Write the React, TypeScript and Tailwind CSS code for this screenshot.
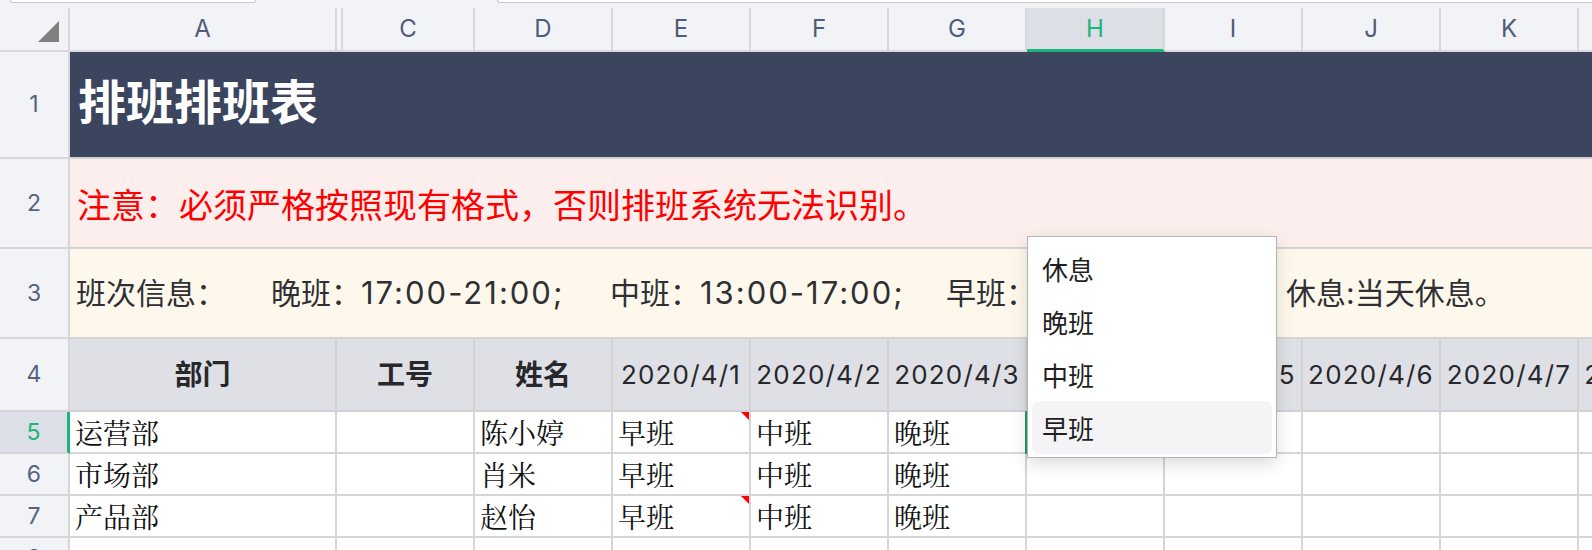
import React from 'react';

type Col = { key: string; w: string; head: string; active?: boolean };

const cols: Col[] = [
  { key: 'A', w: 'w-[267px]', head: '部门' },
  { key: 'C', w: 'w-[138px]', head: '工号' },
  { key: 'D', w: 'w-[138px]', head: '姓名' },
  { key: 'E', w: 'w-[138px]', head: '2020/4/1' },
  { key: 'F', w: 'w-[138px]', head: '2020/4/2' },
  { key: 'G', w: 'w-[138px]', head: '2020/4/3' },
  { key: 'H', w: 'w-[138px]', head: '2020/4/4', active: true },
  { key: 'I', w: 'w-[138px]', head: '2020/4/5' },
  { key: 'J', w: 'w-[138px]', head: '2020/4/6' },
  { key: 'K', w: 'w-[138px]', head: '2020/4/7' },
  { key: 'L', w: 'w-[138px]', head: '2020/4/8' },
];

const people = [
  { n: 5, h: 'h-[42px]', cells: ['运营部', '', '陈小婷', '早班', '中班', '晚班'], note: true, active: true },
  { n: 6, h: 'h-[42px]', cells: ['市场部', '', '肖米', '早班', '中班', '晚班'] },
  { n: 7, h: 'h-[42px]', cells: ['产品部', '', '赵怡', '早班', '中班', '晚班'], note: true },
  { n: 8, h: 'h-[42px]', cells: [] as string[] },
];

const options = ['休息', '晚班', '中班', '早班'];

const RowHead = ({ n, active }: { n: number; active?: boolean }) => (
  <div
    className={
      'w-[70px] shrink-0 flex items-center justify-center border-b-2 border-[#d6d6d8] text-[23px] ' +
      (active
        ? 'bg-[#dcdfe6] text-[#1db57b] border-r-[3px] border-r-[#1db57b]'
        : 'bg-[#f2f3f7] text-[#55637f] border-r-2')
    }
  >
    {n}
  </div>
);

const isText = (k: string) => k === 'A' || k === 'C' || k === 'D';

const App = () => {
  return (
    <div className="relative w-[1592px] h-[550px] overflow-hidden bg-[#f2f3f7] font-['Inter','Noto_Sans_CJK_SC',sans-serif]">
      {/* toolbar edge */}
      <div className="flex h-[8px] pl-[10px]">
        <div className="w-[246px] h-[3px] shrink-0 bg-white border-x border-b border-[#c8c8c8] rounded-b-[6px]" />
        <div className="ml-[241px] w-[1200px] h-[3px] shrink-0 bg-white border-l border-b border-[#c8c8c8] rounded-bl-[6px]" />
      </div>

      {/* column letters */}
      <div className="flex h-[44px] text-[24px] text-[#4f5b78]">
        <div className="w-[70px] shrink-0 flex items-end justify-end pr-[9px] pb-[8px] border-r-2 border-b-2 border-[#d8d8da]">
          <svg width="21" height="21" viewBox="0 0 21 21">
            <polygon points="21,0 21,21 0,21" fill="#808080" />
          </svg>
        </div>
        <div className="w-[267px] shrink-0 flex items-center justify-center border-r-2 border-b-2 border-[#d8d8da]">A</div>
        <div className="w-[6px] shrink-0 border-r-2 border-b-2 border-[#d8d8da]" />
        {cols.slice(1).map((c) => (
          <div
            key={c.key}
            className={
              (c.key === 'C' ? 'w-[132px] ' : 'w-[138px] ') +
              'shrink-0 flex items-center justify-center border-r-2 border-[#d8d8da] ' +
              (c.active ? 'bg-[#dcdfe6] text-[#1db57b] border-b-[3px] border-b-[#1db57b]' : 'border-b-2')
            }
          >
            {c.key}
          </div>
        ))}
      </div>

      {/* row 1 */}
      <div className="flex h-[107px]">
        <RowHead n={1} />
        <div className="flex-1 flex items-center pl-[8px] pb-[3px] bg-[#3b455d] border-b-2 border-[#d3d3d3] text-[48px] font-bold text-white">
          排班排班表
        </div>
      </div>

      {/* row 2 */}
      <div className="flex h-[90px]">
        <RowHead n={2} />
        <div className="flex-1 flex items-center pl-[7px] bg-[#fdeeee] border-b-2 border-[#d3d3d3] text-[34px] text-[#ff0000] font-['Noto_Sans_CJK_SC',sans-serif] whitespace-nowrap">
          注意：必须严格按照现有格式，否则排班系统无法识别。
        </div>
      </div>

      {/* row 3 */}
      <div className="flex h-[90px]">
        <RowHead n={3} />
        <div className="flex-1 flex items-center pl-[6px] bg-[#fef8ec] border-b-2 border-[#d3d3d3] text-[30px] text-[#2e3033] whitespace-nowrap">
          <span className="w-[195px] shrink-0">班次信息：</span>
          <span className="w-[339px] shrink-0">
            晚班：<span className="text-[31px] tracking-[2px]">17:00-21:00;</span>
          </span>
          <span className="w-[336px] shrink-0">
            中班：<span className="text-[31px] tracking-[2px]">13:00-17:00;</span>
          </span>
          <span className="w-[340px] shrink-0">
            早班：<span className="text-[31px] tracking-[2px]">09:00-13:00;</span>
          </span>
          <span className="shrink-0">休息:当天休息。</span>
        </div>
      </div>

      {/* row 4 header */}
      <div className="flex h-[73px]">
        <RowHead n={4} />
        {cols.map((c) => (
          <div
            key={c.key}
            className={
              c.w +
              ' shrink-0 flex items-center justify-center overflow-hidden whitespace-nowrap bg-[#dfe0e5] border-r-2 border-b-2 border-[#d2d2d5] text-[#26282b] ' +
              (isText(c.key) ? 'font-bold text-[28px]' : 'text-[26px] tracking-[1.2px]')
            }
          >
            {c.head}
          </div>
        ))}
      </div>

      {/* data rows */}
      {people.map((r) => (
        <div key={r.n} className={'flex ' + r.h}>
          <RowHead n={r.n} active={r.active} />
          {cols.map((c, i) => (
            <div
              key={c.key}
              className={
                c.w +
                ' relative shrink-0 flex items-center pl-[5px] bg-white border-r-2 border-b-2 border-[#d6d6d8] text-[28px] text-[#111] whitespace-nowrap font-["Noto_Serif_CJK_SC","Noto_Sans_CJK_SC",serif]'
              }
            >
              {r.cells[i] ?? ''}
              {r.note && c.key === 'E' && (
                <svg className="absolute top-0 right-0" width="8" height="8" viewBox="0 0 8 8">
                  <polygon points="0,0 8,0 8,8" fill="#ff0000" />
                </svg>
              )}
              {r.active && c.key === 'H' && (
                <div className="absolute -left-[2px] -top-[1px] w-[141px] h-[44px] border-2 border-[#1a9e66]" />
              )}
            </div>
          ))}
        </div>
      ))}

      {/* validation dropdown */}
      <div className="absolute left-[1027px] top-[236px] w-[250px] h-[222px] flex flex-col px-[4px] pt-[5px] pb-[3px] bg-white border border-[#b3b3b3] shadow-[0_6px_16px_rgba(0,0,0,0.14)] font-['Noto_Sans_CJK_SC',sans-serif]">
        {options.map((o) => (
          <div
            key={o}
            className={
              'h-[53px] shrink-0 flex items-center pl-[10px] rounded-[7px] text-[26px] text-[#1f1f1f] ' +
              (o === '早班' ? 'bg-[#f4f4f6]' : '')
            }
          >
            {o}
          </div>
        ))}
      </div>
    </div>
  );
};

export default App;
